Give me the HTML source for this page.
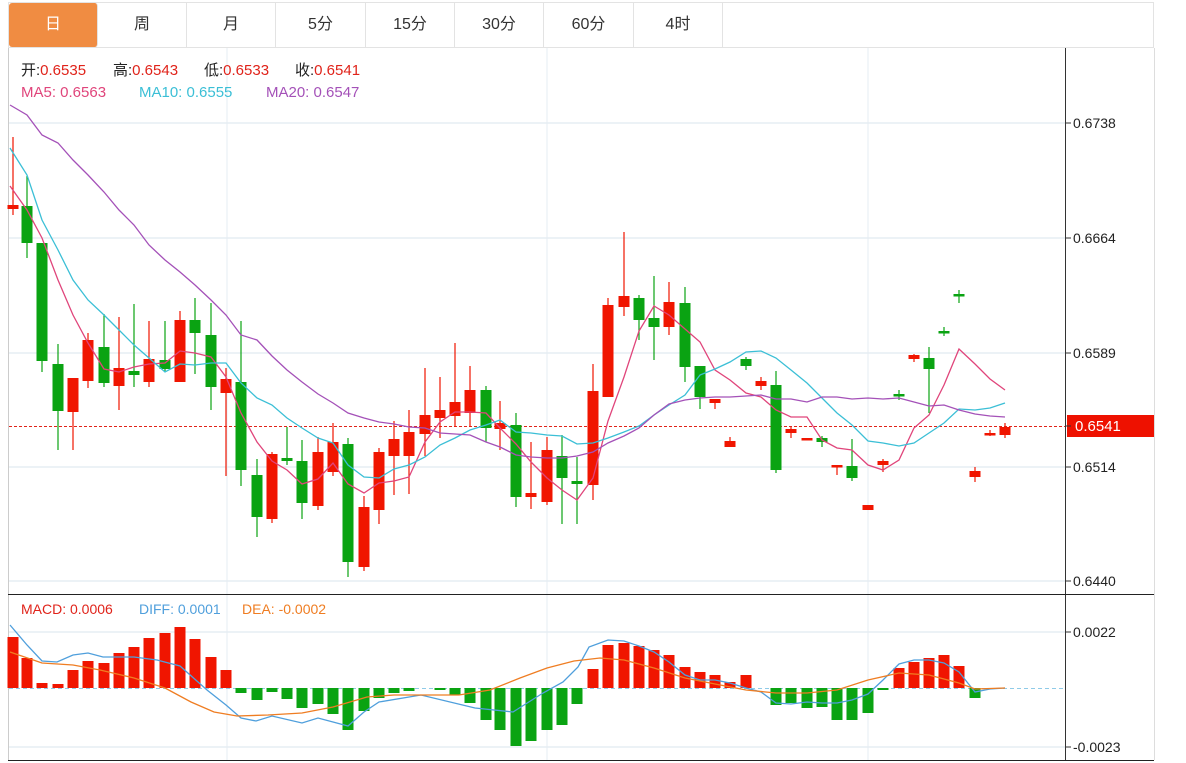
<!DOCTYPE html>
<html><head><meta charset="utf-8"><style>
body{margin:0;background:#fff;width:1186px;height:763px;overflow:hidden;font-family:"Liberation Sans","Noto Sans CJK SC",sans-serif;}
.tabs{position:absolute;left:8px;top:2px;height:46px;width:1146px;border:1px solid #e3e3e3;box-sizing:border-box;}
.tab{position:absolute;top:0;height:44px;line-height:44px;text-align:center;font-size:16px;color:#333;border-right:1px solid #e3e3e3;box-sizing:border-box;}
.tab.on{background:#f08c42;color:#fff;border-radius:3px;}
svg{position:absolute;left:0;top:0}
</style></head><body>
<div class="tabs">
<div class="tab on" style="left:0;width:89px">日</div>
<div class="tab" style="left:89px;width:89px">周</div>
<div class="tab" style="left:178px;width:89px">月</div>
<div class="tab" style="left:267px;width:90px">5分</div>
<div class="tab" style="left:357px;width:89px">15分</div>
<div class="tab" style="left:446px;width:89px">30分</div>
<div class="tab" style="left:535px;width:90px">60分</div>
<div class="tab" style="left:625px;width:89px">4时</div>
</div>
<svg id="s" width="1186" height="763" xmlns="http://www.w3.org/2000/svg"></svg>
<script>
var s='';
function L(x1,y1,x2,y2,c,w,d){s+='<line x1="'+x1+'" y1="'+y1+'" x2="'+x2+'" y2="'+y2+'" stroke="'+c+'" stroke-width="'+(w||1)+'"'+(d?' stroke-dasharray="'+d+'"':'')+'/>';}
function T(x,y,t,c,sz,a){s+='<text x="'+x+'" y="'+y+'" fill="'+c+'" font-size="'+(sz||14)+'" font-family="Liberation Sans,Noto Sans CJK SC,sans-serif"'+(a?' text-anchor="'+a+'"':'')+'>'+t+'</text>';}
var g='#e6edf3';
[123,238,353,467,581,632,747].forEach(function(y){L(9,y,1065,y,g,1.5)});
[227,547,868].forEach(function(x){L(x,48,x,760,g,1)});
L(8.5,48,8.5,760,'#ccc',1);L(1154.5,48,1154.5,760,'#ddd',1);
L(1065.5,48,1065.5,760,'#333',1);
L(8,594.5,1154,594.5,'#222',1);L(8,760.5,1154,760.5,'#222',1);
[[123,'0.6738'],[238,'0.6664'],[353,'0.6589'],[467,'0.6514'],[581,'0.6440'],[632,'0.0022'],[747,'-0.0023']].forEach(function(a){L(1065,a[0],1071,a[0],'#333');T(1073,a[0]+5,a[1],'#222',14)});
L(9,426.5,1065,426.5,'#e0231a',1,'3,2');
var xs=[13,27,42,58,73,88,104,119,134,149,165,180,195,211,226,241,257,272,287,302,318,333,348,364,379,394,409,425,440,455,470,486,500,516,531,547,562,577,593,608,624,639,654,669,685,700,715,730,746,761,776,791,807,822,837,852,868,883,899,914,929,944,959,975,990,1005];
var R='#f01500',G='#0aa312';
var c=[[R,205,209,137,215],[G,206,243,176,258],[G,243,361,243,372],[G,364,411,344,450],[R,378,412,378,450],[R,340,381,333,388],[G,347,383,314,387],[R,368,386,317,410],[G,371,375,304,387],[R,359,382,321,387],[G,360,369,321,371],[R,320,382,311,382],[G,320,333,298,374],[G,335,387,303,410],[R,379,393,368,476],[G,382,470,321,486],[G,475,517,459,537],[R,454,519,452,523],[G,458,461,427,465],[G,461,503,440,519],[R,452,506,437,510],[R,442,472,423,476],[G,444,562,438,577],[R,507,567,496,571],[R,452,510,448,524],[R,439,456,421,495],[R,432,456,410,494],[R,415,434,368,456],[R,410,418,377,438],[R,402,416,343,427],[R,390,413,366,427],[G,390,428,386,442],[R,423,429,401,450],[G,425,497,413,507],[R,493,497,442,509],[R,450,502,437,505],[G,456,478,435,524],[G,481,484,457,524],[R,391,485,364,500],[R,305,397,298,397],[R,296,307,232,316],[G,298,320,295,340],[G,318,327,276,360],[R,302,327,282,335],[G,303,367,287,382],[G,366,397,366,409],[R,399,403,399,409],[R,441,447,437,447],[G,359,366,357,370],[R,381,386,377,390],[G,385,470,371,473],[R,429,433,427,438],[R,438,440,438,440],[G,438,442,436,447],[R,465,467,465,475],[G,466,478,439,481],[R,505,510,505,510],[R,461,465,459,472],[G,394,396,390,400],[R,355,359,354,362],[G,358,369,347,413],[G,331,333,327,336],[G,294,296,290,303],[R,471,477,467,482],[R,433,435,430,436],[R,427,435,423,438]];
c.forEach(function(k,i){var x=xs[i];L(x,k[3],x,k[4],k[0],1.2);var h=Math.max(k[2]-k[1],2.5);s+='<rect x="'+(x-5.5)+'" y="'+k[1]+'" width="11" height="'+h+'" fill="'+k[0]+'"/>';});
function P(ys,col){var p=ys.map(function(y,i){return (i==0?10:xs[i])+','+y}).join(' ');s+='<polyline points="'+p+'" fill="none" stroke="'+col+'" stroke-width="1.3"/>';}
function PP(pts,col){s+='<polyline points="'+pts.map(function(a){return a.join(',')}).join(' ')+'" fill="none" stroke="'+col+'" stroke-width="1.3"/>';}
P([186,210,238,280,315,343,369,372,367,364,363,351,353,357,377,413,442,461,470,484,479,463,484,493,483,481,477,442,422,412,412,413,428,444,462,478,490,500,478,421,377,331,306,315,329,342,370,380,393,397,410,417,417,440,448,450,465,470,460,428,415,385,349,364,379,390],'#e0457b');
P([148,175,220,250,280,300,315,330,345,358,372,364,365,363,363,383,398,405,418,428,438,443,465,477,478,469,465,457,445,438,430,425,420,432,433,435,436,444,443,438,432,426,415,405,395,375,369,362,352,351,358,370,383,398,413,425,441,443,446,443,433,423,409,410,408,403],'#3bbfd6');
P([105,115,135,143,160,175,192,210,225,245,260,272,285,300,315,335,340,356,370,382,394,403,413,418,422,424,427,428,433,434,435,442,447,455,457,458,458,456,452,443,436,428,415,404,400,398,397,397,396,395,399,399,402,397,397,399,398,399,398,402,406,405,410,414,416,417],'#a451b8');
var mh=[637,658,683,684,670,661,663,653,647,638,633,627,639,657,670,693,700,692,699,708,704,714,730,711,698,693,691,689,690,695,703,720,730,746,741,730,725,704,669,645,643,646,650,655,667,672,675,682,675,689,705,703,708,707,720,720,713,690,668,662,658,655,666,698,689];
L(9,688.5,1065,688.5,'#8fcbe8',1,'4,3');
mh.forEach(function(y,i){var x=xs[i];if(Math.abs(y-688)<1.5)return;var col=y<688?R:G;var t=Math.min(y,688),h=Math.abs(y-688);s+='<rect x="'+(x-5.5)+'" y="'+t+'" width="11" height="'+h+'" fill="'+col+'"/>';});
PP([[10,625],[27,645],[42,661],[57,662],[73,655],[88,653],[103,657],[134,657],[157,660],[180,666],[207,690],[226,705],[241,718],[256,721],[272,716],[302,723],[318,718],[333,722],[348,726],[364,712],[379,702],[421,695],[475,708],[513,712],[543,693],[563,682],[578,667],[589,647],[608,640],[624,641],[639,646],[654,652],[669,662],[685,675],[700,680],[715,680],[730,683],[746,688],[761,692],[776,703],[791,704],[807,702],[822,703],[837,703],[852,700],[868,694],[883,680],[899,664],[914,660],[929,660],[944,663],[959,672],[975,692],[990,689],[1005,688]],'#4f9fdc');
PP([[10,652],[42,663],[73,665],[100,670],[134,678],[165,688],[191,702],[214,712],[237,716],[268,715],[302,713],[333,707],[367,697],[394,695],[425,695],[459,695],[490,690],[520,678],[547,668],[574,661],[600,658],[624,660],[654,668],[685,678],[715,684],[746,690],[776,693],[807,693],[837,690],[868,680],[899,673],[929,675],[959,683],[975,689],[1005,688]],'#ef7d22');
s+='<rect x="1067" y="415" width="87" height="22" fill="#ee1100"/>';L(1065,426,1071,426,'#333');
T(1075,431,'0.6541','#fff',15);
T(21,75,'开:<tspan fill="#e0231a">0.6535</tspan>','#222',15);
T(113,75,'高:<tspan fill="#e0231a">0.6543</tspan>','#222',15);
T(204,75,'低:<tspan fill="#e0231a">0.6533</tspan>','#222',15);
T(295,75,'收:<tspan fill="#e0231a">0.6541</tspan>','#222',15);
T(21,97,'MA5: 0.6563','#e0457b',15);T(139,97,'MA10: 0.6555','#3bbfd6',15);T(266,97,'MA20: 0.6547','#a451b8',15);
T(21,614,'MACD: 0.0006','#e0231a',14);T(139,614,'DIFF: 0.0001','#4f9fdc',14);T(242,614,'DEA: -0.0002','#ef7d22',14);
document.getElementById('s').innerHTML=s;
</script>
</body></html>
